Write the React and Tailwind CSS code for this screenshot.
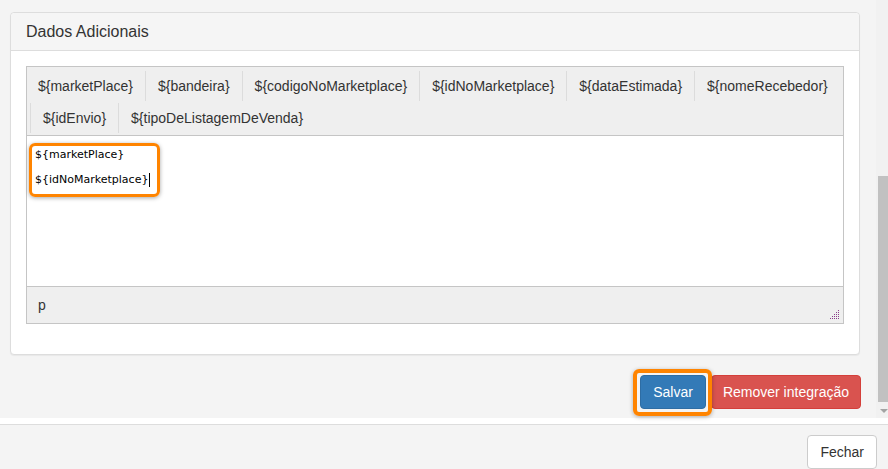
import React from "react";

const row1 = ["${marketPlace}", "${bandeira}", "${codigoNoMarketplace}", "${idNoMarketplace}", "${dataEstimada}", "${nomeRecebedor}"];
const row2 = ["${idEnvio}", "${tipoDeListagemDeVenda}"];

function ToolBtn({ label, first }) {
  return (
    <div className={"h-[30px] flex items-center pr-3 " + (first ? "pl-[11px]" : "pl-3 border-l border-[#dcdcdc]")}>
      {label}
    </div>
  );
}

function Handle() {
  const pts = [[8, 0], [6, 2], [8, 2], [4, 4], [6, 4], [8, 4], [2, 6], [4, 6], [6, 6], [8, 6], [0, 8], [2, 8], [4, 8], [6, 8], [8, 8]];
  return (
    <svg width="10" height="10" viewBox="0 0 10 10" className="absolute right-[3px] bottom-[3px]">
      {pts.map(([x, y], i) => (
        <rect key={i} x={x} y={y} width="1" height="1" fill="#8b3f8b" />
      ))}
    </svg>
  );
}

export default function App() {
  return (
    <div className="w-[888px] h-[469px] bg-[#f4f4f4] overflow-hidden flex flex-col text-[14px] text-[#333]" style={{ fontFamily: '"Liberation Sans", Arial, sans-serif' }}>
      <div className="flex h-[418px] shrink-0">
        <div className="flex-1 pt-[12px] pl-[10px] pr-[16px]">
          <div className="bg-white border border-[#dddddd] rounded-[4px] shadow-[0_1px_1px_rgba(0,0,0,0.05)]">
            <div className="h-[38px] bg-[#f5f5f5] border-b border-[#dddddd] rounded-t-[4px] flex items-center pl-[15px] text-[16px] text-[#333]">
              Dados Adicionais
            </div>
            <div className="px-[15px] pt-[15px] pb-[30px]">
              <div className="border border-[#c5c5c5] relative">
                <div className="bg-[#efefef] border-b border-[#c5c5c5] pt-[4px] pb-[2px] flex flex-col gap-[2px]">
                  <div className="flex">
                    {row1.map((l, i) => (
                      <ToolBtn key={l} label={l} first={i === 0} />
                    ))}
                  </div>
                  <div className="flex pl-[3px]">
                    {row2.map((l) => (
                      <ToolBtn key={l} label={l} />
                    ))}
                  </div>
                </div>
                <div className="h-[150px] bg-white relative px-[8px] py-[11px] text-[11px] leading-[14px] text-black" style={{ fontFamily: '"DejaVu Sans", Verdana, sans-serif' }}>
                  <p className="mt-px">{"${marketPlace}"}</p>
                  <p className="mt-[11px] flex items-center">
                    {"${idNoMarketplace}"}
                    <span className="inline-block w-px h-[14px] bg-black ml-px" />
                  </p>
                  <div className="absolute left-[2px] top-[7px] w-[131px] h-[54px] border-[3px] border-[#ff8400] rounded-[6px] shadow-[0_1px_4px_rgba(0,0,0,0.35)]" />
                </div>
                <div className="h-[37px] bg-[#efefef] border-t border-[#c5c5c5] flex items-center pl-[11px] relative">
                  p
                  <Handle />
                </div>
              </div>
            </div>
          </div>
          <div className="flex justify-end gap-[5px] mt-[20px] -mr-[1px]">
            <div className="relative">
              <button className="h-[34px] px-[12px] bg-[#337ab7] border border-[#2e6da4] rounded-[4px] text-white">Salvar</button>
              <div className="absolute left-[-7px] right-[-6px] top-[-6px] bottom-[-7px] border-[4px] border-[#ff8400] rounded-[6px] shadow-[0_1px_4px_rgba(0,0,0,0.3)]" />
            </div>
            <button className="h-[34px] px-[11px] bg-[#d9534f] border border-[#d43f3a] rounded-[4px] text-white">Remover integração</button>
          </div>
        </div>
        <div className="w-[12px] bg-[#f1f1f1] relative">
          <div className="absolute left-[2px] right-0 top-[176px] h-[226px] bg-[#c1c1c1]" />
          <div className="absolute left-[4px] top-[409px] w-0 h-0 border-l-[4px] border-r-[4px] border-t-[4px] border-l-transparent border-r-transparent border-t-[#a3a3a3]" />
        </div>
      </div>
      <div className="h-[6px] bg-white shrink-0" />
      <div className="flex-1 border-t border-[#dddddd] flex justify-end items-start pt-[10px] pr-[11px]">
        <button className="h-[34px] px-[12px] bg-white border border-[#cccccc] rounded-[4px] text-[#333]">Fechar</button>
      </div>
    </div>
  );
}
